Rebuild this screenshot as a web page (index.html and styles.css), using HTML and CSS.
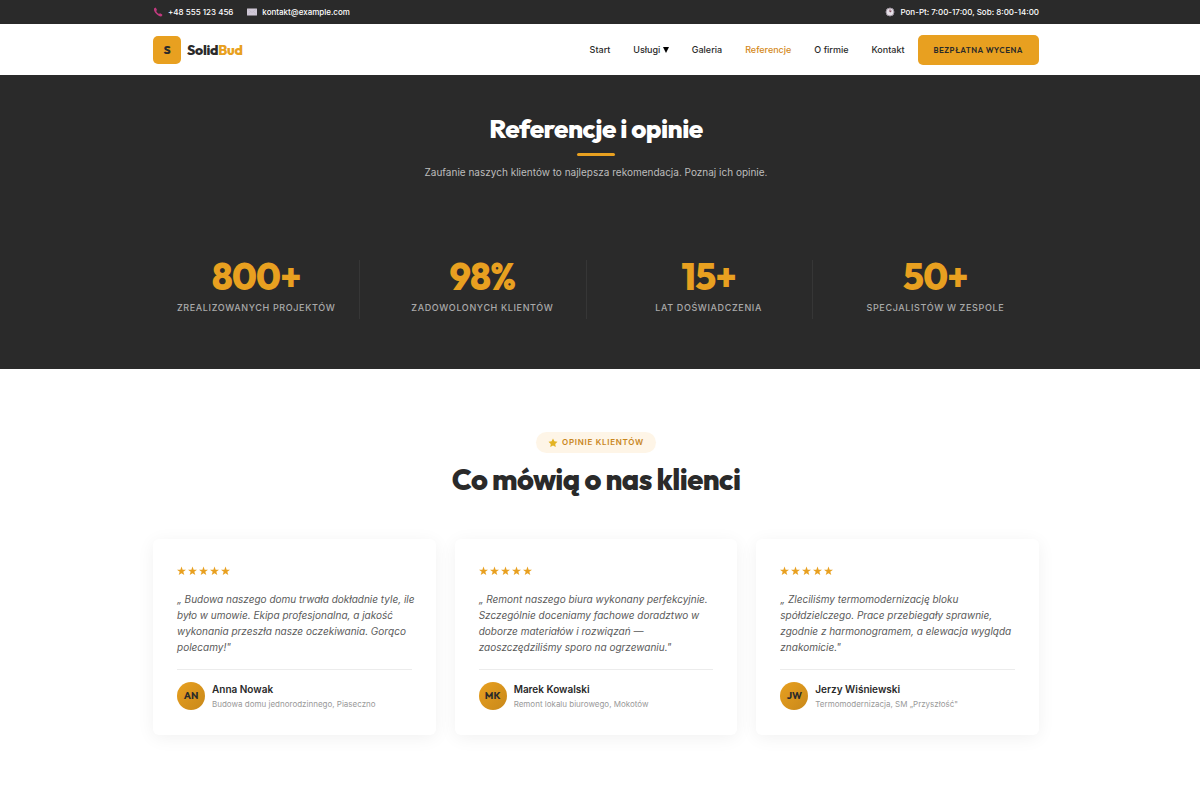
FILE: index.html
```html
<!DOCTYPE html>
<html lang="pl">
<head>
    <meta charset="UTF-8">
    <meta name="viewport" content="width=device-width, initial-scale=1.0">
    <title>Referencje i opinie - SolidBud</title>
    <link rel="stylesheet" href="styles.css">
</head>
<body>
    <svg width="0" height="0" class="sprite" aria-hidden="true">
        <symbol id="star" viewBox="0 0 20 20">
            <path d="M10 0 L12.5 7 L20 7.3 L14 11.8 L16.2 19 L10 14.8 L3.8 19 L6 11.8 L0 7.3 L7.5 7 Z"/>
        </symbol>
    </svg>

    <!-- Top bar -->
    <div class="top-bar">
        <div class="container top-bar-inner">
            <div class="top-contact">
                <a href="tel:+48555123456">
                    <svg class="icon" viewBox="0 0 20 20"><path d="M2 3 L5 1 Q6 1 8 6 L6.3 8 Q8 12 12 14 L14 12.3 Q19 14.5 19 16 L17 18.5 Q14 20 8 15 Q1 9 2 3 Z" fill="#c03a7e"/></svg>
                    +48 555 123 456
                </a>
                <a href="mailto:kontakt@example.com">
                    <svg class="icon" viewBox="0 0 20 20"><rect x="0" y="3" width="20" height="14" rx="1" fill="#cfc8d6"/><path d="M1 4 L10 11 L19 4 M1 16 L7 9 M19 16 L13 9" fill="none" stroke="#b8b1c0"/></svg>
                    kontakt@example.com
                </a>
            </div>
            <div class="top-hours">
                <svg class="icon" viewBox="0 0 20 20"><circle cx="10" cy="10" r="8" fill="#e5dfe6" stroke="#9b929d" stroke-width="2"/><path d="M10 5 V10 L13 8" fill="none" stroke="#7c4355" stroke-width="2"/></svg>
                Pon-Pt: 7:00-17:00, Sob: 8:00-14:00
            </div>
        </div>
    </div>

    <!-- Header -->
    <header class="header">
        <div class="container header-inner">
            <a href="#" class="logo">
                <span class="logo-mark">S</span>
                <span class="logo-text">Solid<span>Bud</span></span>
            </a>
            <nav class="nav">
                <a href="#">Start</a>
                <a href="#">Usługi <svg class="caret" viewBox="0 0 6 6"><path d="M0 0 H6 L3 6 Z"/></svg></a>
                <a href="#">Galeria</a>
                <a href="#" class="active">Referencje</a>
                <a href="#">O firmie</a>
                <a href="#">Kontakt</a>
                <a href="#" class="btn">Bezpłatna wycena</a>
            </nav>
        </div>
    </header>

    <!-- Hero -->
    <section class="hero">
        <div class="container">
            <h1>Referencje i opinie</h1>
            <p>Zaufanie naszych klientów to najlepsza rekomendacja. Poznaj ich opinie.</p>
        </div>
    </section>

    <!-- Stats -->
    <section class="stats">
        <div class="container stats-grid">
            <div class="stat">
                <div class="stat-number">800+</div>
                <div class="stat-label">Zrealizowanych projektów</div>
            </div>
            <div class="stat">
                <div class="stat-number">98%</div>
                <div class="stat-label">Zadowolonych klientów</div>
            </div>
            <div class="stat">
                <div class="stat-number">15+</div>
                <div class="stat-label">Lat doświadczenia</div>
            </div>
            <div class="stat">
                <div class="stat-number">50+</div>
                <div class="stat-label">Specjalistów w zespole</div>
            </div>
        </div>
    </section>

    <!-- Testimonials -->
    <section class="testimonials">
        <div class="container">
            <div class="section-header">
                <span class="badge"><svg class="badge-star" viewBox="0 0 20 20"><path d="M10 1 L12.8 6.5 L19 7.5 L14.500 12 L15.5 18 L10 15.2 L4.5 18 L5.5 12 L1 7.5 L7.2 6.5 Z"/></svg>Opinie klientów</span>
                <h2>Co mówią o nas klienci</h2>
            </div>
            <div class="cards">
                <article class="card">
                    <div class="stars">
                        <svg><use href="#star"/></svg><svg><use href="#star"/></svg><svg><use href="#star"/></svg><svg><use href="#star"/></svg><svg><use href="#star"/></svg>
                    </div>
                    <p class="quote">„ Budowa naszego domu trwała dokładnie tyle, ile było w umowie. Ekipa profesjonalna, a jakość wykonania przeszła nasze oczekiwania. Gorąco polecamy!"</p>
                    <div class="author">
                        <div class="avatar">AN</div>
                        <div>
                            <h3>Anna Nowak</h3>
                            <p>Budowa domu jednorodzinnego, Piaseczno</p>
                        </div>
                    </div>
                </article>
                <article class="card">
                    <div class="stars">
                        <svg><use href="#star"/></svg><svg><use href="#star"/></svg><svg><use href="#star"/></svg><svg><use href="#star"/></svg><svg><use href="#star"/></svg>
                    </div>
                    <p class="quote">„ Remont naszego biura wykonany perfekcyjnie. Szczególnie doceniamy fachowe doradztwo w doborze materiałów i rozwiązań — zaoszczędziliśmy sporo na ogrzewaniu."</p>
                    <div class="author">
                        <div class="avatar">MK</div>
                        <div>
                            <h3>Marek Kowalski</h3>
                            <p>Remont lokalu biurowego, Mokotów</p>
                        </div>
                    </div>
                </article>
                <article class="card">
                    <div class="stars">
                        <svg><use href="#star"/></svg><svg><use href="#star"/></svg><svg><use href="#star"/></svg><svg><use href="#star"/></svg><svg><use href="#star"/></svg>
                    </div>
                    <p class="quote">„ Zleciliśmy termomodernizację bloku spółdzielczego. Prace przebiegały sprawnie, zgodnie z harmonogramem, a elewacja wygląda znakomicie."</p>
                    <div class="author">
                        <div class="avatar">JW</div>
                        <div>
                            <h3>Jerzy Wiśniewski</h3>
                            <p>Termomodernizacja, SM „Przyszłość"</p>
                        </div>
                    </div>
                </article>
            </div>
        </div>
    </section>
</body>
</html>
```

FILE: styles.css
```css
* { margin: 0; padding: 0; box-sizing: border-box; }
body { font-family: 'Inter', sans-serif; font-size: 10px; line-height: 16px; color: #2a2a2a; background: #fff; }
a { color: inherit; text-decoration: none; }
h1, h2, .logo, .stat-number { font-family: 'Outfit', 'Lato', sans-serif; font-weight: 800; letter-spacing: -0.02em; }
.sprite { position: absolute; }
.top-bar, .header, .hero, .stats, .testimonials { padding-right: 8px; }
.container { width: 100%; max-width: 926px; margin: 0 auto; padding: 0 20px; }

/* Top bar */
.top-bar { background: #2a2a2a; color: #fff; font-size: 8px; font-weight: 500; }
.top-bar-inner { display: flex; justify-content: space-between; align-items: center; height: 24px; }
.top-contact { display: flex; gap: 14px; }
.top-contact a, .top-hours { display: flex; align-items: center; gap: 5px; }
.icon { width: 10px; height: 10px; }

/* Header */
.header { background: #fff; box-shadow: 0 1px 3px rgba(0, 0, 0, 0.15); }
.header-inner { display: flex; justify-content: space-between; align-items: center; height: 51px; }
.logo { display: flex; align-items: center; gap: 6px; font-size: 14px; }
.logo-mark { display: flex; align-items: center; justify-content: center; width: 28px; height: 28px; background: #e8a020; border-radius: 5px; font-size: 12px; }
.logo-text span { color: #e8a020; }
.nav { display: flex; align-items: center; gap: 23px; font-size: 9px; font-weight: 500; }
.nav .active { color: #d4891a; }
.caret { width: 6px; height: 6px; }
.nav .btn { margin-left: -10px; padding: 7px 16px; background: #e8a020; border-radius: 5px; font-family: 'Outfit', 'Lato', sans-serif; font-size: 8px; font-weight: 600; letter-spacing: 0.06em; text-transform: uppercase; }

/* Hero */
.hero { background: #2a2a2a; padding-top: 38px; text-align: center; }
.hero h1 { color: #fff; font-size: 26px; line-height: 32px; }
.hero h1::after { content: ''; display: block; width: 38px; height: 3px; margin: 8px auto; background: #e8a020; border-radius: 2px; }
.hero p { color: #bdbdbd; }

/* Stats */
.stats { background: #2a2a2a; padding-top: 80px; padding-bottom: 50px; }
.stats-grid { display: grid; grid-template-columns: repeat(4, 1fr); gap: 19px; text-align: center; }
.stat { min-height: 59px; border-right: 1px solid #363636; }
.stat:last-child { border-right: none; }
.stat-number { color: #e8a020; font-size: 37px; line-height: 34px; }
.stat-label { margin-top: 6px; color: #aaa; font-size: 9px; font-weight: 500; letter-spacing: 0.07em; text-transform: uppercase; }

/* Testimonials */
.testimonials { padding-top: 63px; padding-bottom: 64px; }
.section-header { text-align: center; margin-bottom: 40px; }
.badge { display: inline-flex; align-items: center; gap: 4px; padding: 3px 12px; background: #fef5e7; color: #c8861c; border-radius: 20px; font-size: 8px; line-height: 15px; font-weight: 600; letter-spacing: 0.09em; text-transform: uppercase; }
.badge-star { width: 10px; height: 10px; fill: #e3b323; }
.section-header h2 { margin-top: 8px; font-size: 29px; line-height: 38px; }
.cards { display: grid; grid-template-columns: repeat(3, 1fr); gap: 19px; }
.card { padding: 24px; background: #fff; border-radius: 6px; box-shadow: 0 3px 18px rgba(0, 0, 0, 0.06); }
.stars { display: flex; gap: 2px; margin-bottom: 12px; }
.stars svg { width: 9px; height: 16px; fill: #e8a020; }
.quote { margin-right: -6px; color: #5a5a5a; font-style: italic; }
.author { display: flex; align-items: center; gap: 7px; margin-top: 14px; padding-top: 11px; border-top: 1px solid #ececec; }
.avatar { display: flex; align-items: center; justify-content: center; width: 28px; height: 28px; border-radius: 50%; background: linear-gradient(135deg, #e8a020, #c8881a); font-family: 'Outfit', 'Lato', sans-serif; font-size: 10px; font-weight: 700; }
.author h3 { font-size: 10px; line-height: 16px; font-weight: 600; }
.author p { color: #999; font-size: 8px; line-height: 14px; }

@media (max-width: 768px) {
    .top-bar-inner, .header-inner { flex-wrap: wrap; height: auto; padding-top: 6px; padding-bottom: 6px; }
    .nav { flex-wrap: wrap; gap: 12px; }
    .nav .btn { margin-left: 0; }
    .stats-grid { grid-template-columns: repeat(2, 1fr); }
    .cards { grid-template-columns: 1fr; }
}
```
